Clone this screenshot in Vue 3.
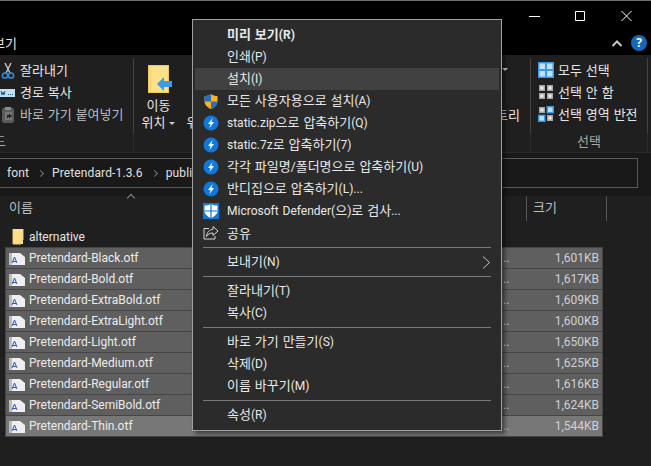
<script setup>
const files = [
  ['Pretendard-Black.otf', '1,601KB'],
  ['Pretendard-Bold.otf', '1,617KB'],
  ['Pretendard-ExtraBold.otf', '1,609KB'],
  ['Pretendard-ExtraLight.otf', '1,600KB'],
  ['Pretendard-Light.otf', '1,650KB'],
  ['Pretendard-Medium.otf', '1,625KB'],
  ['Pretendard-Regular.otf', '1,616KB'],
  ['Pretendard-SemiBold.otf', '1,624KB'],
  ['Pretendard-Thin.otf', '1,544KB']
]
const menu = [
  { t: '미리 보기(R)', bold: true },
  { t: '인쇄(P)' },
  { t: '설치(I)', hover: true },
  { t: '모든 사용자용으로 설치(A)', icon: 'uac' },
  { t: 'static.zip으로 압축하기(Q)', icon: 'zip' },
  { t: 'static.7z로 압축하기(7)', icon: 'zip' },
  { t: '각각 파일명/폴더명으로 압축하기(U)', icon: 'zip' },
  { t: '반디집으로 압축하기(L)...', icon: 'zip' },
  { t: 'Microsoft Defender(으)로 검사...', icon: 'def' },
  { t: '공유', icon: 'share' },
  { sep: true },
  { t: '보내기(N)', sub: true },
  { sep: true },
  { t: '잘라내기(T)' },
  { t: '복사(C)' },
  { sep: true },
  { t: '바로 가기 만들기(S)' },
  { t: '삭제(D)' },
  { t: '이름 바꾸기(M)' },
  { sep: true },
  { t: '속성(R)' }
]
// Hangul and Latin use different sizes, as the two faces of the original UI font do.
const runs = (s) =>
  s.split(/([\uAC00-\uD7A3 ]+)/).filter(Boolean).map((t) => ({ t, latin: !/[\uAC00-\uD7A3]/.test(t) }))
</script>

<template>
  <div class="win">
    <header class="title">
      <div class="controls">
        <svg width="12" height="12" viewBox="0 0 12 12"><path d="M0 6.500h11" stroke="#fff" fill="none"/></svg>
        <svg width="12" height="12" viewBox="0 0 12 12"><path d="M.5 1.500h9v9h-9z" stroke="#fff" fill="none"/></svg>
        <svg width="12" height="12" viewBox="0 0 12 12"><path d="M.5 1l10 10M10.500 1l-10 10" stroke="#fff" fill="none"/></svg>
      </div>
      <div class="tabs">
        <span class="tab">보기</span>
        <svg class="collapse" width="10" height="7" viewBox="0 0 10 7"><path d="M.5 6l4.500-4.500L9.500 6" stroke="#c8c8c8" stroke-width="2" fill="none"/></svg>
        <span class="help">?</span>
      </div>
    </header>

    <section class="ribbon">
      <div class="group clip">
        <div class="gbody">
          <div class="rrow">
            <svg class="ric" width="16" height="17" viewBox="0 0 16 17"><path d="M5 1l5 10M11 1L6 11" stroke="#c4c8cc" stroke-width="1.400" fill="none"/><circle cx="5" cy="13.500" r="2.600" stroke="#2f8fe0" stroke-width="1.500" fill="none"/><circle cx="11" cy="13.500" r="2.600" stroke="#2f8fe0" stroke-width="1.500" fill="none"/></svg>
            <span>잘라내기</span>
          </div>
          <div class="rrow">
            <svg class="ric" width="16" height="17" viewBox="0 0 16 17"><rect x="0" y="5" width="15" height="8" fill="#bfe0fb"/><path d="M1 7l1 4 1-3 1 3 1-4" stroke="#2b5a86" fill="none"/><path d="M8 10.500h1M10 10.500h1M12 10.500h1" stroke="#2b5a86"/></svg>
            <span>경로 복사</span>
          </div>
          <div class="rrow dim">
            <svg class="ric" width="16" height="17" viewBox="0 0 16 17"><rect x="2" y="2" width="12" height="15" rx="2" fill="#5a5a5a"/><rect x="5" y="1" width="6" height="3" fill="#8a8a8a"/><path d="M5 6h7v8H5z" fill="#777"/><path d="M7 12V9h2V7.500l3 2.500-3 2.500V11H8v1z" fill="#222"/></svg>
            <span>바로 가기 붙여넣기</span>
          </div>
        </div>
        <div class="glabel">클립보드</div>
      </div>

      <div class="group org">
        <div class="gbody orgbody">
          <div class="bigs">
            <div class="big">
              <svg width="30" height="29" viewBox="0 0 30 29"><rect x="4.500" y="1.500" width="20" height="27" fill="#fde08a" stroke="#efc85c"/><path d="M6.500 2v26" stroke="#f5d272"/><path d="M13 20l7-7v4h8v6h-8v4z" fill="#3a9be8"/></svg>
              <span class="bigtext">이동<br>위치 <i class="drop"></i></span>
            </div>
            <div class="big">
              <svg width="30" height="29" viewBox="0 0 30 29"><rect x="4.500" y="1.500" width="20" height="27" fill="#fde08a" stroke="#efc85c"/></svg>
              <span class="bigtext">복사<br>위치 <i class="drop"></i></span>
            </div>
          </div>
          <div class="hist">
            <i class="drop"></i>
            <span>히스토리</span>
          </div>
        </div>
        <div class="glabel"></div>
      </div>

      <div class="group sel">
        <div class="gbody selbody">
          <div class="rrow">
            <svg class="ric" width="16" height="16" viewBox="0 0 16 16"><rect width="16" height="16" fill="#3b9ae6"/><path d="M1.500 1.500h5.500v5.500h-5.500zM9 1.500h5.500v5.500H9zM1.500 9h5.500v5.500h-5.500zM9 9h5.500v5.500H9z" fill="#bfe0fb"/></svg>
            <span>모두 선택</span>
          </div>
          <div class="rrow">
            <svg class="ric" width="16" height="16" viewBox="0 0 16 16"><path d="M1 1h6v6H1zM9 1h6v6H9zM1 9h6v6H1zM9 9h6v6H9z" fill="#a8a8a8"/><path d="M2.500 2.500h3v3h-3zM10.500 2.500h3v3h-3zM2.500 10.500h3v3h-3zM10.500 10.500h3v3h-3z" fill="#eee"/></svg>
            <span>선택 안 함</span>
          </div>
          <div class="rrow">
            <svg class="ric" width="16" height="16" viewBox="0 0 16 16"><path d="M1 1h6v6H1zM9 9h6v6H9z" fill="#a8a8a8"/><path d="M2.500 2.500h3v3h-3zM10.500 10.500h3v3h-3z" fill="#eee"/><path d="M8.500 0H16v7.500H8.500zM0 8.500h7.500V16H0z" fill="#3b9ae6"/><path d="M10 1.500h4.500V6H10zM1.500 10H6v4.500H1.500z" fill="#bfe0fb"/></svg>
            <span>선택 영역 반전</span>
          </div>
        </div>
        <div class="glabel">선택</div>
      </div>
    </section>

    <nav class="addr">
      <div class="addrbox">
        <span class="latin">font</span><i class="chev"></i>
        <span class="latin">Pretendard-1.3.6</span><i class="chev"></i>
        <span class="latin">public</span>
      </div>
    </nav>

    <main class="list">
      <div class="thead">
        <span class="hname">이름<i class="caret"></i></span>
        <span class="hsize">크기</span>
        <span class="hend"></span>
      </div>
      <div class="folder">
        <svg width="16" height="17" viewBox="0 0 16 17"><path d="M3 1h10v15H3z" fill="#fde08a"/><path d="M3 1v15h8v-4h2V1" fill="none" stroke="#f3d06c"/></svg>
        <span class="latin">alternative</span>
      </div>
      <div class="files">
        <div v-for="(f, i) in files" :key="f[0]" class="file" :class="{ last: i === files.length - 1 }">
          <svg width="16" height="13" viewBox="0 0 16 13"><path d="M0 1h11l5 4v8H0z" fill="#efefef"/><path d="M0 1h3v12H0z" fill="#bdbdbd"/><path d="M3 11l2.500-6L8 11M4 9.500h3" stroke="#2c55c0" fill="none"/></svg>
          <span class="fname latin">{{ f[0] }}</span>
          <span class="ftype latin">..</span>
          <span class="fsize latin">{{ f[1] }}</span>
        </div>
      </div>
    </main>

    <div class="menu">
      <template v-for="(m, i) in menu" :key="i">
        <div v-if="m.sep" class="sep"></div>
        <div v-else class="item" :class="{ hover: m.hover, bold: m.bold }">
          <span class="mic">
            <svg v-if="m.icon === 'uac'" width="16" height="17" viewBox="0 0 16 17"><path d="M8 1c2 1.500 4 2 6.500 2v5c0 4-3 6.500-6.500 8-3.500-1.500-6.500-4-6.500-8V3C4 3 6 2.500 8 1z" fill="#f4b51e"/><path d="M8 1v7.500H1.500V3C4 3 6 2.500 8 1zM8 8.500h6.500c0 3.700-3 6-6.500 7.500z" fill="#2b6cc4"/></svg>
            <svg v-else-if="m.icon === 'zip'" width="16" height="16" viewBox="0 0 16 16"><circle cx="8" cy="8" r="7.500" fill="#0f78dc"/><path d="M9.500 3L5 9h2.500l-1 4L11 7H8.500z" fill="#fff"/></svg>
            <svg v-else-if="m.icon === 'def'" width="16" height="16" viewBox="0 0 16 16"><rect width="16" height="16" fill="#0f78d4"/><path d="M8 1c2 1 4 1.500 6.500 1.500V8c0 3-3 5.500-6.500 7C4.500 13.500 1.500 11 1.500 8V2.500C4 2.500 6 2 8 1z" fill="#fff"/><path d="M8 1v14M1.500 8h13" stroke="#0f78d4" stroke-width="1.200"/></svg>
            <svg v-else-if="m.icon === 'share'" width="16" height="16" viewBox="0 0 16 16"><path d="M10 1.500l5 4.500-5 4.500V8C7 8 5 9 3.500 11.500 4 7.500 6 4.500 10 4.300z" fill="none" stroke="#d8d8d8"/><path d="M6 3.500H1v10.500h11v-3" fill="none" stroke="#d8d8d8"/></svg>
          </span>
          <span class="mtext"><span v-for="(r, j) in runs(m.t)" :key="j" :class="{ latin: r.latin }">{{ r.t }}</span></span>
          <svg v-if="m.sub" class="subarrow" width="9" height="13" viewBox="0 0 9 13"><path d="M1 .5l6.500 6-6.500 6" stroke="#c4c4c4" fill="none"/></svg>
        </div>
      </template>
    </div>
  </div>
</template>

<style>
html, body { margin: 0; background: #1f1f1f; }
</style>

<style scoped>
.win {
  position: relative;
  width: 651px;
  height: 466px;
  overflow: hidden;
  background: #1f1f1f;
  color: #e6e6e6;
  font: 13px/16px "Noto Sans CJK KR", sans-serif;
  word-spacing: 1px;
  display: flex;
  flex-direction: column;
}
.latin { font: inherit; font-family: Roboto, sans-serif; font-size: 12px; }
.title {
  height: 54px;
  background: #000;
  border-top: 1px solid #707070;
  display: flex;
  flex-direction: column;
}
.controls {
  height: 30px;
  display: flex;
  justify-content: flex-end;
  align-items: center;
  gap: 34px;
  padding-right: 18px;
}
.tabs {
  flex: 1;
  display: flex;
  align-items: center;
  margin-left: -7px;
  padding-right: 4px;
}
.tab { flex: 1; color: #e6e6e6; }
.collapse { margin-right: 9px; }
.help {
  width: 16px;
  height: 16px;
  border-radius: 50%;
  background: #1668b8;
  color: #fff;
  font-family: "Noto Sans", sans-serif;
  font-weight: 700;
  font-size: 12px;
  line-height: 16px;
  text-align: center;
}
.ribbon {
  height: 98px;
  display: flex;
  background: #1f1f1f;
  border-bottom: 1px solid #2a2a2a;
  box-sizing: border-box;
}
.group { display: flex; flex-direction: column; }
.gbody {
  height: 75px;
  margin-top: 3px;
  border-right: 1px solid #444;
}
.glabel {
  flex: 1;
  text-align: center;
  color: #a8a8a8;
  line-height: 16px;
  border-right: 1px solid #2c2c2c;
}
.clip { width: 153px; margin-left: -19px; }
.clip .gbody { padding: 1px 0 0 19px; box-sizing: border-box; }
.clip .glabel { text-align: left; text-indent: -23px; }
.rrow {
  height: 22px;
  display: flex;
  align-items: center;
  gap: 4px;
}
.rrow .ric { flex: none; }
.dim { color: #bdbdbd; }
.org { width: 397px; }
.orgbody {
  display: flex;
  justify-content: space-between;
  padding-left: 2px;
  padding-right: 10px;
}
.bigs { display: flex; }
.big {
  width: 45px;
  display: flex;
  flex-direction: column;
  align-items: center;
  padding-top: 6px;
}
.bigtext { text-align: center; line-height: 17px; margin-top: 3px; }
.drop {
  display: inline-block;
  width: 0;
  height: 0;
  border: 3px solid transparent;
  border-top: 3px solid #ccc;
  border-bottom: 0;
  vertical-align: middle;
}
.hist {
  display: flex;
  flex-direction: column;
  align-items: flex-end;
}
.hist .drop { margin-top: 10px; margin-right: 12px; }
.hist span { margin-top: 36px; }
.sel { width: 117px; }
.selbody { padding: 1px 0 0 7px; box-sizing: border-box; }
.addr {
  height: 35px;
  background: #191919;
  display: flex;
  padding-top: 5px;
  box-sizing: border-box;
}
.addrbox {
  width: 638px;
  height: 30px;
  box-sizing: border-box;
  border: 1px solid #5a5a5a;
  border-left: 0;
  padding-left: 7px;
  display: flex;
  align-items: center;
  gap: 9px;
  color: #e0e0e0;
}
.addrbox .latin { letter-spacing: .12px; }
.chev {
  width: 4px;
  height: 4px;
  border-top: 1.500px solid #777;
  border-right: 1.500px solid #777;
  transform: rotate(45deg);
}
.list { flex: 1; display: flex; flex-direction: column; background: #1f1f1f; }
.thead {
  height: 38px;
  display: flex;
  background: linear-gradient(#191919 8px, #1f1f1f 8px);
  padding-top: 8px;
  box-sizing: border-box;
  color: #bdbdbd;
}
.hname {
  position: relative;
  width: 527px;
  padding-left: 9px;
  box-sizing: border-box;
  line-height: 22px;
  border-right: 1px solid #555;
  height: 25px;
}
.caret {
  position: absolute;
  left: 128px;
  top: -1px;
  width: 5px;
  height: 5px;
  border-top: 1px solid #888;
  border-left: 1px solid #888;
  transform: rotate(45deg);
}
.hsize {
  width: 80px;
  padding-left: 6px;
  box-sizing: border-box;
  line-height: 22px;
  border-right: 1px solid #555;
  height: 25px;
}
.folder {
  height: 21px;
  display: flex;
  align-items: center;
  gap: 3px;
  padding-left: 10px;
}
.files { margin-left: 5px; width: 598px; border-left: 1px solid #444; border-right: 1px solid #444; box-sizing: border-box; }
.file {
  height: 21px;
  box-sizing: border-box;
  background: #5f5f5f;
  border-top: 1px solid #454545;
  display: flex;
  align-items: center;
  padding-left: 3px;
  padding-right: 3px;
  color: #ececec;
}
.file:last-child { border-bottom: 1px solid #454545; height: 22px; }
.file.last { background: #777; }
.fname { margin-left: 4px; flex: 1; }
.ftype { width: 46px; color: #ccc; }
.fsize { width: 50px; text-align: right; color: #d0d0d0; }
.menu {
  position: absolute;
  left: 192px;
  top: 19px;
  width: 310px;
  height: 412px;
  box-sizing: border-box;
  background: #2b2b2b;
  border: 1px solid #a0a0a0;
  padding: 4px 2px;
  box-shadow: 3px 3px 4px rgba(0, 0, 0, .45);
  color: #e8e8e8;
}
.item {
  height: 22px;
  display: flex;
  align-items: center;
  padding-left: 8px;
  position: relative;
}
.item.hover { background: #414141; }
.item.bold { font-weight: 700; }
.mic {
  width: 16px;
  height: 17px;
  flex: none;
  margin-right: 8px;
  display: flex;
  align-items: center;
}
.mtext { margin-top: -1px; }
.subarrow { position: absolute; right: 8px; top: 5px; }
.sep {
  height: 1px;
  margin: 3px 8px;
  background: #7a7a7a;
}
</style>
